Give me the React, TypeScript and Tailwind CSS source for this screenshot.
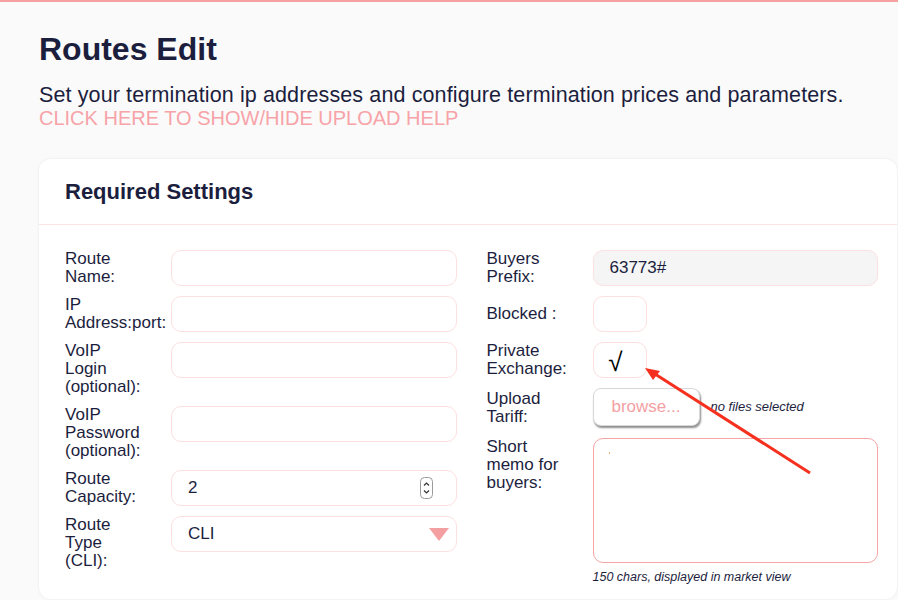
import React from "react";

const FONT = { fontFamily: '"Liberation Sans", Arial, sans-serif' };

function Label({ children, center }: { children: React.ReactNode; center?: boolean }) {
    return (
        <div
            className={`w-[106px] shrink-0 text-[17px] leading-[18px] text-[#1c1e3e] ${center ? "self-center" : ""}`}
        >
            {children}
        </div>
    );
}

function TextBox({ value, disabled }: { value?: string; disabled?: boolean }) {
    return (
        <div
            className={`flex h-[36px] flex-1 items-center rounded-[10px] border border-[#fde0e0] px-4 text-[17px] text-[#1c1e3e] ${
                disabled ? "bg-[#f5f5f5]" : "bg-white"
            }`}
        >
            {value}
        </div>
    );
}

function Spinner() {
    return (
        <svg width="13" height="22" viewBox="0 0 13 22" fill="none">
            <rect x="0.5" y="0.5" width="12" height="21" rx="4" stroke="#9a9a9a" />
            <path d="M4 8.5 L6.5 6 L9 8.5" stroke="#333" strokeWidth="1.2" />
            <path d="M4 13.5 L6.5 16 L9 13.5" stroke="#333" strokeWidth="1.2" />
        </svg>
    );
}

export default function App() {
    return (
        <div className="min-h-[600px] border-t-2 border-[#f6a0a0] bg-[#fafafa] pl-[39px]" style={FONT}>
            <h1 className="pt-[28px] text-[32px] font-bold leading-[38px] text-[#1c1e3e]">Routes Edit</h1>
            <p className="mt-[16px] text-[21.5px] leading-[23px] tracking-[0.12px] text-[#1c1e3e]">
                Set your termination ip addresses and configure termination prices and parameters.
            </p>
            <p className="text-[20px] leading-[23px] text-[#f7a3a8]">CLICK HERE TO SHOW/HIDE UPLOAD HELP</p>

            <div className="relative mt-[29px] w-[858px] rounded-[12px] bg-white shadow-[0_0_3px_rgba(0,0,0,0.08)]">
                <div className="flex h-[66px] items-center border-b border-[#fde3e3] pl-[26px]">
                    <h2 className="text-[22px] font-bold leading-[28px] text-[#1c1e3e]">Required Settings</h2>
                </div>

                <div className="grid grid-cols-2 gap-x-[30px] pb-[14px] pl-[26px] pr-[19px] pt-[25px]">
                    <div className="flex flex-col gap-[10px]">
                        <div className="flex items-start">
                            <Label>
                                Route
                                <br />
                                Name:
                            </Label>
                            <TextBox />
                        </div>
                        <div className="flex items-start">
                            <Label>
                                IP
                                <br />
                                Address:port:
                            </Label>
                            <TextBox />
                        </div>
                        <div className="flex items-start">
                            <Label>
                                VoIP
                                <br />
                                Login
                                <br />
                                (optional):
                            </Label>
                            <TextBox />
                        </div>
                        <div className="flex items-start">
                            <Label>
                                VoIP
                                <br />
                                Password
                                <br />
                                (optional):
                            </Label>
                            <TextBox />
                        </div>
                        <div className="flex items-start">
                            <Label>
                                Route
                                <br />
                                Capacity:
                            </Label>
                            <div className="flex h-[36px] flex-1 items-center justify-between rounded-[10px] border border-[#fde0e0] bg-white pl-4 pr-[23px] text-[17px] text-[#1c1e3e]">
                                <span>2</span>
                                <Spinner />
                            </div>
                        </div>
                        <div className="flex items-start">
                            <Label>
                                Route
                                <br />
                                Type
                                <br />
                                (CLI):
                            </Label>
                            <div className="flex h-[36px] flex-1 items-center justify-between rounded-[10px] border border-[#fde0e0] bg-white pl-4 pr-[7px] text-[17px] text-[#1c1e3e]">
                                <span>CLI</span>
                                <svg width="20" height="13" viewBox="0 0 20 13">
                                    <path d="M0 0 H20 L10 13 Z" fill="#f4a0a3" />
                                </svg>
                            </div>
                        </div>
                    </div>

                    <div className="flex flex-col gap-[10px]">
                        <div className="flex items-start">
                            <Label>
                                Buyers
                                <br />
                                Prefix:
                            </Label>
                            <TextBox value="63773#" disabled />
                        </div>
                        <div className="flex items-start">
                            <Label center>Blocked :</Label>
                            <div className="h-[36px] w-[54px] rounded-[10px] border border-[#fde0e0] bg-white" />
                        </div>
                        <div className="flex items-start">
                            <Label>
                                Private
                                <br />
                                Exchange:
                            </Label>
                            <div className="flex h-[36px] w-[54px] items-center justify-center rounded-[10px] border border-[#fde0e0] bg-white pr-[8px] pt-[4px] text-[26px] leading-none text-black">
                                √
                            </div>
                        </div>
                        <div className="flex items-start">
                            <div className="pt-[2px]">
                                <Label>
                                    Upload
                                    <br />
                                    Tariff:
                                </Label>
                            </div>
                            <div className="flex items-center">
                                <div className="flex h-[38px] w-[107px] items-center justify-center rounded-[8px] border border-[#d8d8d8] bg-white text-[17px] text-[#f4a0a3] shadow-[1px_2px_2px_rgba(0,0,0,0.45)]">
                                    browse...
                                </div>
                                <span className="ml-[11px] text-[13px] italic text-[#1c1e3e]">no files selected</span>
                            </div>
                        </div>
                        <div className="mt-[2px] flex items-start">
                            <Label>
                                Short
                                <br />
                                memo for
                                <br />
                                buyers:
                            </Label>
                            <div className="flex-1">
                                <div className="relative h-[125px] rounded-[10px] border border-[#f5a5a5] bg-white">
                                    <span className="absolute left-[15px] top-[13px] h-[2px] w-[1px] bg-[#f5b070]" />
                                </div>
                                <p className="mt-[6px] text-[12.5px] italic leading-[16px] text-[#1c1e3e]">
                                    150 chars, displayed in market view
                                </p>
                            </div>
                        </div>
                    </div>
                </div>

                <svg className="pointer-events-none absolute left-0 top-0" width="858" height="440">
                    <line x1="771" y1="314" x2="616" y2="215" stroke="#f5301e" strokeWidth="3" />
                    <path d="M606 209 L621 212 L614 221 Z" fill="#f5301e" />
                </svg>
            </div>
        </div>
    );
}
